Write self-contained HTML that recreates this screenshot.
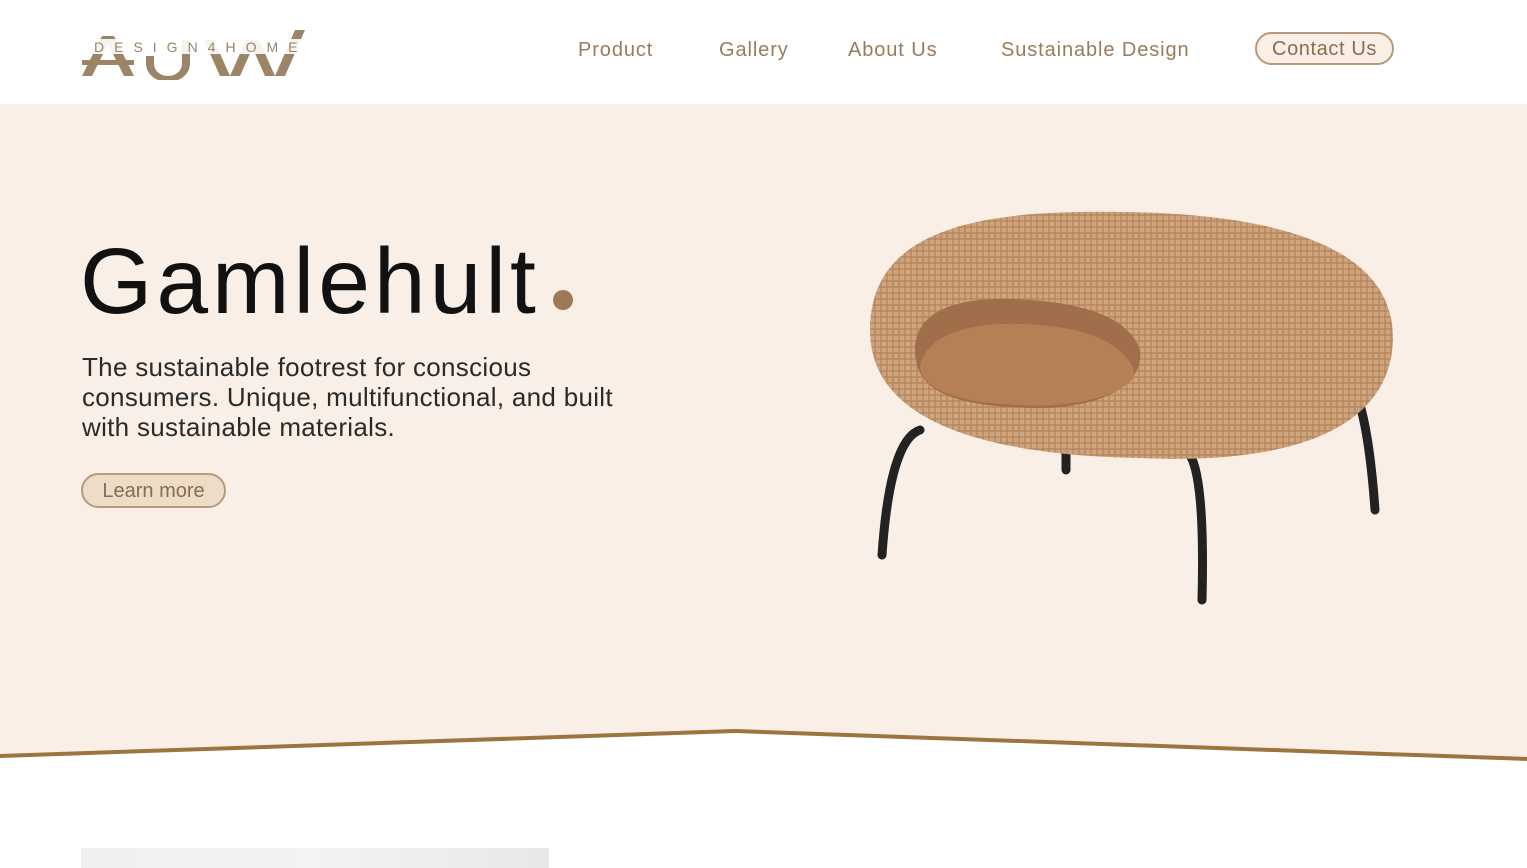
<!DOCTYPE html>
<html><head><meta charset="utf-8"><style>
*{margin:0;padding:0;box-sizing:border-box}
body{width:1527px;height:868px;overflow:hidden;background:#fff;font-family:"Liberation Sans",sans-serif;position:relative}
.hdr{position:absolute;top:0;left:0;width:1527px;height:104px;background:#fff}
.nav a{position:absolute;top:39px;font-size:20px;letter-spacing:0.9px;color:#9a7b5c;text-decoration:none;white-space:nowrap}
.cta{position:absolute;left:1255px;top:32px;width:139px;height:33px;border:2px solid #b89a7a;border-radius:17px;background:#f9efe6;color:#8a6d4e;font-size:20px;letter-spacing:0.6px;text-align:center;line-height:30px}
.hero{position:absolute;top:104px;left:0;width:1527px;height:660px;background:#f9efe6}
h1{position:absolute;left:80px;top:228px;font-weight:normal;font-size:93px;color:#111;letter-spacing:4px}
.dot{position:absolute;left:553px;top:290px;width:20px;height:20px;border-radius:50%;background:#9c7a55}
p{position:absolute;left:82px;top:352px;width:575px;font-size:26px;line-height:30px;color:#2a2a2a;letter-spacing:0.3px}
.btn{position:absolute;left:81px;top:473px;width:145px;height:35px;border:2px solid #b89a7a;border-radius:18px;background:#ecdcc8;color:#8a6d4e;font-size:20px;text-align:center;line-height:32px}
.card{position:absolute;left:81px;top:848px;width:468px;height:20px;background:linear-gradient(90deg,#f0f0f0,#f3f3f3,#e8e8e8)}
</style></head><body>
<div class="hero"></div>
<svg style="position:absolute;left:0;top:700px" width="1527" height="80">
<polygon points="0,56 735,31 1527,59 1527,80 0,80" fill="#fff"/>
<polyline points="0,56 735,31 1527,59" fill="none" stroke="#9c7440" stroke-width="4"/>
</svg>
<div class="hdr"></div>
<svg style="position:absolute;left:80px;top:26px" width="230" height="54" viewBox="0 0 230 54">
<g fill="#9c8466">
<polygon points="2,50 22,10 34,10 54,50 44,50 28,18 12,50"/>
<rect x="2" y="34" width="52" height="5"/>
<path d="M74,30 v8 a14,12 0 0 0 28,0 v-24 h8 v24 a22,18 0 0 1 -44,0 v-8z"/>
<polygon points="150,50 160,50 176,14 166,14"/><polygon points="150,50 140,50 124,14 134,14"/>
<polygon points="195,50 205,50 225,4 215,4"/><polygon points="195,50 185,50 169,14 179,14"/>
</g>
<rect x="10" y="13" width="220" height="15" fill="#fff" opacity="0.9"/>
<text x="14" y="26" font-family="Liberation Sans" font-size="14" letter-spacing="10" fill="#9c8466">DESIGN4HOME</text>
</svg>
<div class="nav">
<a style="left:578px">Product</a><a style="left:719px">Gallery</a><a style="left:848px">About Us</a><a style="left:1001px">Sustainable Design</a>
</div>
<div class="cta">Contact Us</div>
<h1>Gamlehult</h1><div class="dot"></div>
<p>The sustainable footrest for conscious consumers. Unique, multifunctional, and built with sustainable materials.</p>
<div class="btn">Learn more</div>
<svg style="position:absolute;left:860px;top:200px" width="545" height="420">
<defs><pattern id="w" width="6" height="6" patternUnits="userSpaceOnUse"><rect width="6" height="6" fill="#cfa47c"/><path d="M0,3h6M3,0v6" stroke="#b2835a" stroke-width="1.2"/></pattern></defs>
<g stroke="#222" stroke-width="9" fill="none" stroke-linecap="round">
<path d="M60,230 Q30,240 22,355"/><path d="M330,255 Q345,280 342,400"/><path d="M500,205 Q510,240 515,310"/><path d="M206,240 v30"/>
</g>
<path d="M10,130 C10,20 140,10 265,12 C400,14 535,40 533,140 C530,230 430,265 280,258 C120,255 10,220 10,130Z" fill="url(#w)"/>
<path d="M55,150 C55,105 110,95 170,100 C230,104 270,120 280,150 C285,185 240,210 170,208 C90,206 55,190 55,150Z" fill="#a06e4a"/>
<path d="M60,165 C70,130 120,120 180,125 C240,130 270,150 275,175 C260,200 200,208 160,205 C100,203 60,190 60,165Z" fill="#b58055"/>
</svg>
<div class="card"></div>
</body></html>
